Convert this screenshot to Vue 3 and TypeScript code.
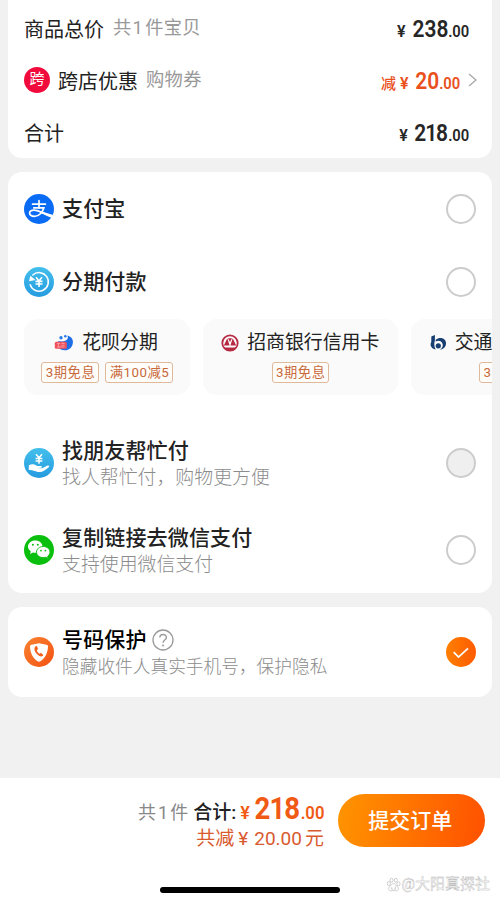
<script setup lang="ts">
interface Tag { text: string }
interface Plan { id: string; name: string; tags: Tag[] }

const plans: Plan[] = [
  { id: 'huabei', name: '花呗分期', tags: [{ text: '3期免息' }, { text: '满100减5' }] },
  { id: 'cmb', name: '招商银行信用卡', tags: [{ text: '3期免息' }] },
  { id: 'bocom', name: '交通银行信用卡', tags: [{ text: '3期免息' }] },
]
</script>

<template>
  <main class="page">
    <section class="card summary">
      <div class="line">
        <span class="label">商品总价</span><span class="note note-total">共<i>1</i>件宝贝</span>
        <span class="price"><span class="yen">¥</span><b>238</b><small>.00</small></span>
      </div>
      <div class="line">
        <span class="cross">跨</span><span class="label">跨店优惠</span><span class="note note-coupon">购物券</span>
        <span class="price off"><span class="minus">减</span><span class="yen">¥</span><b class="short">20</b><small>.00</small></span>
        <svg class="chevron" viewBox="0 0 9 14"><path d="M1 1l7 6-7 6" fill="none" stroke="#aaa" stroke-width="1.4" /></svg>
      </div>
      <div class="line">
        <span class="label">合计</span>
        <span class="price"><span class="yen">¥</span><b>2<span class="one">1</span>8</b><small>.00</small></span>
      </div>
    </section>

    <section class="card methods">
      <div class="method">
        <svg class="logo" viewBox="0 0 30 30">
          <circle cx="15" cy="15" r="15" fill="#0a6cf5" />
          <g fill="none" stroke="#fff" stroke-linecap="round">
            <path d="M8.6 10.2h12.8M15 6.7v7.2" stroke-width="1.7" />
            <path d="M9.8 13.900h10c-1.300 4.300-4.800 8.500-9.100 8.500-3.200 0-5.100-1.200-5.100-3.300 0-2 2.200-3.100 4.500-3 4.700.2 9.300 3.200 17 5.800" stroke-width="1.700" />
          </g>
          <path d="M17.500 17.600l11.700 3.400-1.500 3.100c-4-1.700-7.600-3.400-10.800-5z" fill="#fff" />
        </svg>
        <span class="title">支付宝</span>
        <span class="radio"></span>
      </div>
      <div class="method">
        <svg class="logo" viewBox="0 0 30 30">
          <defs><linearGradient id="cyan" x1="0" y1="0" x2="0" y2="1"><stop offset="0" stop-color="#43bfec" /><stop offset="1" stop-color="#259bdf" /></linearGradient></defs>
          <circle cx="15" cy="15" r="15" fill="url(#cyan)" />
          <path d="M8.800 8A9.300 9.300 0 1 1 6.200 17.800" fill="none" stroke="#fff" stroke-width="1.500" stroke-linecap="round" />
          <path d="M5 14.300l1.400-5.600 5 4.200z" fill="#fff" />
          <path d="M12 10.300l3 3.700 3-3.700M15 14v6M11.500 14.400h7M11.500 17h7" fill="none" stroke="#fff" stroke-width="1.600" />
        </svg>
        <span class="title">分期付款</span>
        <span class="radio"></span>
      </div>

      <div class="plans">
        <article v-for="plan in plans" :key="plan.id" class="plan" :class="plan.id">
          <div class="plan-name">
            <svg v-if="plan.id === 'huabei'" class="bank huabei-icon" viewBox="0 0 20 18">
              <path d="M13.400 1.500c3.500.8 5.900 3.500 5.500 7.200-.4 4.300-3.600 7.500-8 7.600-3.200 0-5.400-1.300-6.600-3.600V7c2.800.8 5.500.6 7.900-.7 1.700-1.200 2.100-2.900 1.200-4.800z" fill="#1e6fe6" />
              <circle cx="7" cy="3.700" r="1.700" fill="#297be9" /><circle cx="11.300" cy="2.300" r="1.300" fill="#297be9" />
              <rect x=".8" y="7.700" width="12" height="7.100" rx="1.600" fill="#f0525e" />
              <path d="M3 9.500h3M4.500 9.500v3.500M7.500 9.500h3M7.500 11.300h3M3 13h7.500" stroke="#ffc4c4" stroke-width=".6" />
            </svg>
            <svg v-else-if="plan.id === 'cmb'" class="bank" viewBox="0 0 18 18">
              <circle cx="9" cy="9" r="7.700" fill="#fff" stroke="#b62b43" stroke-width="1.800" />
              <path d="M6.300 4.200l2.300 7.300H2.800zM11.700 4.200l3.500 7.300H9.400z" fill="#b62b43" />
              <path d="M7 4.200h4L9 8z" fill="#b62b43" />
              <path d="M3 13.600h12l-2.500 2.600h-7z" fill="#b62b43" />
            </svg>
            <svg v-else class="bank" viewBox="0 0 18 18">
              <path d="M2.300 2.600l3.600-1.500v5.500c-1 2.900-.8 6.100.8 9C2 14.700.6 11.200 2.300 7.800z" fill="#173e70" />
              <path d="M6.700 5.700c4.700-3.500 10.500-1.200 10.300 3.700-.1 3.600-2.800 6-6 6 2.700-1.500 3.500-4.300 2.200-6.500-1.300-2.100-3.900-2.900-6.500-1.300z" fill="#173e70" />
              <circle cx="9.300" cy="11.800" r="2.600" fill="#173e70" />
            </svg>
            <span>{{ plan.name }}</span>
          </div>
          <div class="tags"><span v-for="tag in plan.tags" :key="tag.text" class="tag">{{ tag.text }}</span></div>
        </article>
      </div>

      <div class="method tall">
        <svg class="logo" viewBox="0 0 30 30">
          <circle cx="15" cy="15" r="15" fill="url(#cyan)" />
          <path d="M12 6.300l3 3.500 3-3.500M15 9.800v6M11.600 10.400h6.800M11.600 13h6.800" fill="none" stroke="#fff" stroke-width="1.500" />
          <path d="M4.800 17.300c3-1.500 5.800-1.100 8.300.6h3.600c1.600 0 1.700 1.700.2 1.800l-3.700.3 5 .3 5.300-2.700c1.500-.6 2.400.7 1.200 1.700-3 2.500-5.600 4.800-9.200 4.800-3.900 0-5.500-2.100-10.700-2z" fill="#fff" />
        </svg>
        <div class="words"><span class="title">找朋友帮忙付</span><span class="sub">找人帮忙付，购物更方便</span></div>
        <span class="radio disabled"></span>
      </div>
      <div class="method tall">
        <svg class="logo" viewBox="0 0 30 30">
          <circle cx="15" cy="15" r="15" fill="#0abf0d" />
          <path d="M11.300 5.500c-4.200 0-7.300 2.700-7.300 6.100 0 2 1.100 3.700 2.800 4.800l-.8 2.500 3-1.500c.8.200 1.500.3 2.300.3 4.100 0 7.200-2.700 7.200-6.100s-3.100-6.100-7.200-6.100z" fill="#fff" />
          <circle cx="8.900" cy="9.700" r="1" fill="#0abf0d" /><circle cx="13.800" cy="9.700" r="1" fill="#0abf0d" />
          <path d="M19.200 11.500c3.800 0 6.800 2.400 6.800 5.600 0 1.700-.9 3.200-2.400 4.200l.6 2.100-2.600-1.200c-.8.200-1.600.4-2.400.4-3.800 0-6.700-2.400-6.700-5.500 0-3.200 2.900-5.600 6.700-5.600z" fill="#fff" stroke="#0abf0d" stroke-width=".9" />
          <circle cx="17" cy="15.600" r=".9" fill="#0abf0d" /><circle cx="21.400" cy="15.600" r=".9" fill="#0abf0d" />
        </svg>
        <div class="words"><span class="title">复制链接去微信支付</span><span class="sub">支持使用微信支付</span></div>
        <span class="radio"></span>
      </div>
    </section>

    <section class="card privacy">
      <svg class="logo" viewBox="0 0 30 30">
        <defs><linearGradient id="amber" x1="0" y1="0" x2="1" y2="1"><stop offset="0" stop-color="#f98331" /><stop offset="1" stop-color="#f45112" /></linearGradient></defs>
        <circle cx="15" cy="15" r="15" fill="url(#amber)" />
        <path d="M15 6.200c2.500.5 5 .9 7.500 1.500 1.100.2 1.600.9 1.500 2-.3 6.300-2.800 11.400-7.600 14.500-.9.600-1.900.6-2.800 0C8.800 21.100 6.300 16 6 9.700c-.1-1.100.4-1.800 1.500-2 2.500-.6 5-1 7.500-1.500z" fill="#fff" />
        <path d="M11.500 9.400c-3 2.500.7 9 5.700 10 .9.200 1.800-.5 2.100-1.400l-2.400-2.200-1.500.9c-1.400-.8-2.200-2-2.500-3.500l1.100-1.100-.7-2.400c-.5-.7-1.200-.8-1.800-.3z" fill="#f4611d" />
      </svg>
      <div class="words">
        <span class="title">号码保护<svg class="help" viewBox="0 0 22 22"><circle cx="11" cy="11" r="10" fill="none" stroke="#999" stroke-width="1.300" /><path d="M7.800 8.600c0-4.300 6.600-4.100 6.600-.2 0 2.500-3.400 2.700-3.400 5.400" fill="none" stroke="#999" stroke-width="1.400" /><circle cx="11" cy="16.500" r="1" fill="#999" /></svg></span>
        <span class="sub">隐藏收件人真实手机号，保护隐私</span>
      </div>
      <svg class="checked" viewBox="0 0 30 30">
        <defs><linearGradient id="orange" x1="0" y1="0" x2="1" y2="0"><stop offset="0" stop-color="#ff8000" /><stop offset="1" stop-color="#ff5a00" /></linearGradient></defs>
        <circle cx="15" cy="15" r="15" fill="url(#orange)" /><path d="M7.700 15.200l4.800 4.900 9.500-8.700" fill="none" stroke="#fff" stroke-width="1.700" />
      </svg>
    </section>

    <footer class="bar">
      <div class="checkout">
        <div class="totals">
          <div class="sum"><span class="count">共<i>1</i>件</span><span class="sum-label">合计:</span><span class="sum-yen">¥</span><b>2<span class="one">1</span>8</b><small>.00</small></div>
          <div class="saved">共减<span class="saved-yen">¥</span>20.00<span class="yuan">元</span></div>
        </div>
        <button class="submit" type="button"><span>提交订单</span></button>
      </div>
      <div class="home"></div>
      <div class="watermark">
        <svg viewBox="0 0 16 16"><g fill="#fff" stroke="#b5b5b5" stroke-width=".7"><ellipse cx="3" cy="7" rx="1.700" ry="2.200" /><ellipse cx="6" cy="3.500" rx="1.600" ry="2.200" /><ellipse cx="10.500" cy="3.500" rx="1.600" ry="2.200" /><ellipse cx="13.300" cy="7.300" rx="1.700" ry="2.200" /><path d="M8 7c2 0 2.600 2.200 4.300 3.600 2 1.900.5 4.500-1.900 4.100-1.600-.3-3.200-.3-4.800 0-2.400.4-3.900-2.200-1.900-4.100C5.400 9.200 6 7 8 7z" /><path d="M6 11v2h1.500M10 10v3H8.500" fill="none" /></g></svg>
        <span>@大阳真探社</span>
      </div>
    </footer>
  </main>
</template>

<style>
body { margin: 0; background: #f1f1f1; }
</style>

<style scoped>
* { box-sizing: border-box; }
i { font-style: normal; }
.page { width: 500px; height: 902px; padding: 0 8px; display: flex; flex-direction: column; background: #f1f1f1; overflow: hidden; font-family: Roboto, "Noto Sans CJK SC", sans-serif; color: #222; white-space: nowrap; }
.card { flex: none; background: #fff; border-radius: 14px; overflow: hidden; }
.summary { height: 158px; padding: 2px 23px 0 16px; border-radius: 0 0 14px 14px; }
.line { height: 52px; display: flex; align-items: center; }
.label { font-size: 20px; line-height: 28px; padding-top: 3px; }
.note { font-size: 18.300px; line-height: 28px; color: #999; letter-spacing: .3px; }
.note-total { margin-left: 9px; }
.note-total i { margin: 0 2px 0 1px; }
.note-coupon { margin-left: 8px; }
.cross { width: 26px; height: 26px; margin-right: 8px; border-radius: 50%; background: #f10b3d; color: #fff; font-size: 15px; line-height: 25px; text-align: center; }
.price { margin-left: auto; display: flex; align-items: baseline; color: #262626; font-weight: 600; line-height: 28px; padding-top: 5px; }
.price .yen { font-size: 16px; margin-right: 6.500px; }
/* Condensed figures: glyphs are narrowed and the freed width is taken back by the margin. */
.price b { font-size: 23px; font-weight: 600; transform: scaleX(.91); transform-origin: right; margin-left: -3.500px; }
.price b.short { margin-left: -2.300px; }
.price small { font-size: 17px; transform: scaleX(.87); transform-origin: right; margin-left: -3.200px; }
.one { display: inline-block; margin: 0 -1.200px; }
.off { color: #e9501c; }
.minus { font-size: 15px; font-weight: 500; margin-right: 4px; }
.chevron { width: 9px; height: 14px; margin: 0 -8px 0 8px; }

.methods { height: 421px; margin-top: 14px; }
.method { height: 73px; padding: 0 16px; display: flex; align-items: center; }
.tall { height: 87px; }
.logo { flex: none; width: 30px; height: 30px; margin-right: 8px; }
.title { font-size: 21px; line-height: 30px; font-weight: 500; color: #222; letter-spacing: .15px; }
.words { display: flex; flex-direction: column; }
.sub { font-size: 18.900px; line-height: 24px; color: #8c8c8c; font-weight: 300; }
.radio { flex: none; width: 30px; height: 30px; margin-left: auto; border: 2px solid #ccc; border-radius: 50%; }
.disabled { background: #efefef; }
.plans { display: flex; gap: 13px; padding: 1px 0 24px 16px; overflow: hidden; }
.plan { flex: none; width: 194.500px; height: 76px; padding-top: 9px; border-radius: 14px; background: #fafafa; }
.plan.huabei { width: 166px; }
.plan-name { height: 29px; display: flex; justify-content: center; align-items: center; gap: 8px; font-size: 18.900px; line-height: 26px; }
.plan-name > span { padding-top: 1px; }
.bank { width: 18px; height: 18px; }
.huabei-icon { width: 20px; }
.huabei .plan-name { padding-right: 2px; }
.tags { margin-top: 5px; display: flex; justify-content: center; gap: 6.500px; }
.tag { height: 21px; padding: 0 2.500px 0 3.500px; border: 1px solid #e0b99b; border-radius: 3px; background: #fffdfa; color: #c8693a; font-size: 13.300px; line-height: 20px; letter-spacing: .5px; }

.privacy { height: 90px; margin-top: 14px; padding: 0 16px; display: flex; align-items: center; }
.privacy .title { display: flex; align-items: center; color: #000; }
.privacy .sub { font-size: 17.700px; }
.help { width: 22px; height: 22px; margin-left: 5px; }
.checked { width: 30px; height: 30px; margin-left: auto; }

.bar { flex: none; height: 124px; margin: 81px -8px 0; background: #fff; position: relative; padding-top: 16px; }
.checkout { display: flex; justify-content: flex-end; height: 53px; padding-right: 15.500px; gap: 13px; }
.totals { display: flex; flex-direction: column; align-items: flex-end; }
.sum { display: flex; align-items: baseline; height: 31px; line-height: 30px; color: #f05a14; padding-right: 1px; }
.count { font-size: 18px; color: #888; margin-right: 5px; }
.count i { margin: 0 2px; }
.sum-label { font-size: 19px; font-weight: 500; color: #222; margin-right: 4px; }
.sum-yen { font-size: 18px; font-weight: 600; margin-right: 5px; }
.sum b { font-size: 31px; font-weight: 700; transform: scaleX(.89); transform-origin: right; margin-left: -5.500px; }
.sum small { font-size: 18.500px; font-weight: 600; transform: scaleX(.9); transform-origin: right; margin-left: -2.700px; }
.saved { font-size: 19px; line-height: 28px; color: #d95a2e; padding-right: 1px; }
.saved-yen { margin: 0 6px 0 4px; }
.yuan { margin-left: 3px; }
.submit { width: 146.500px; height: 53px; padding: 0 2px 3px 0; border: 0; border-radius: 27px; background: linear-gradient(100deg, #ff9500, #ff5000); color: #fff; font: 500 21px "Noto Sans CJK SC", sans-serif; }
.home { width: 180px; height: 6px; margin: 40px 0 0 160px; border-radius: 3px; background: #000; }
.watermark { position: absolute; right: 10px; bottom: 7px; display: flex; align-items: center; gap: 1px; font-size: 15px; line-height: 22px; color: #fff; -webkit-text-stroke: .4px #b5b5b5; }
.watermark svg { width: 15px; height: 15px; }
</style>
